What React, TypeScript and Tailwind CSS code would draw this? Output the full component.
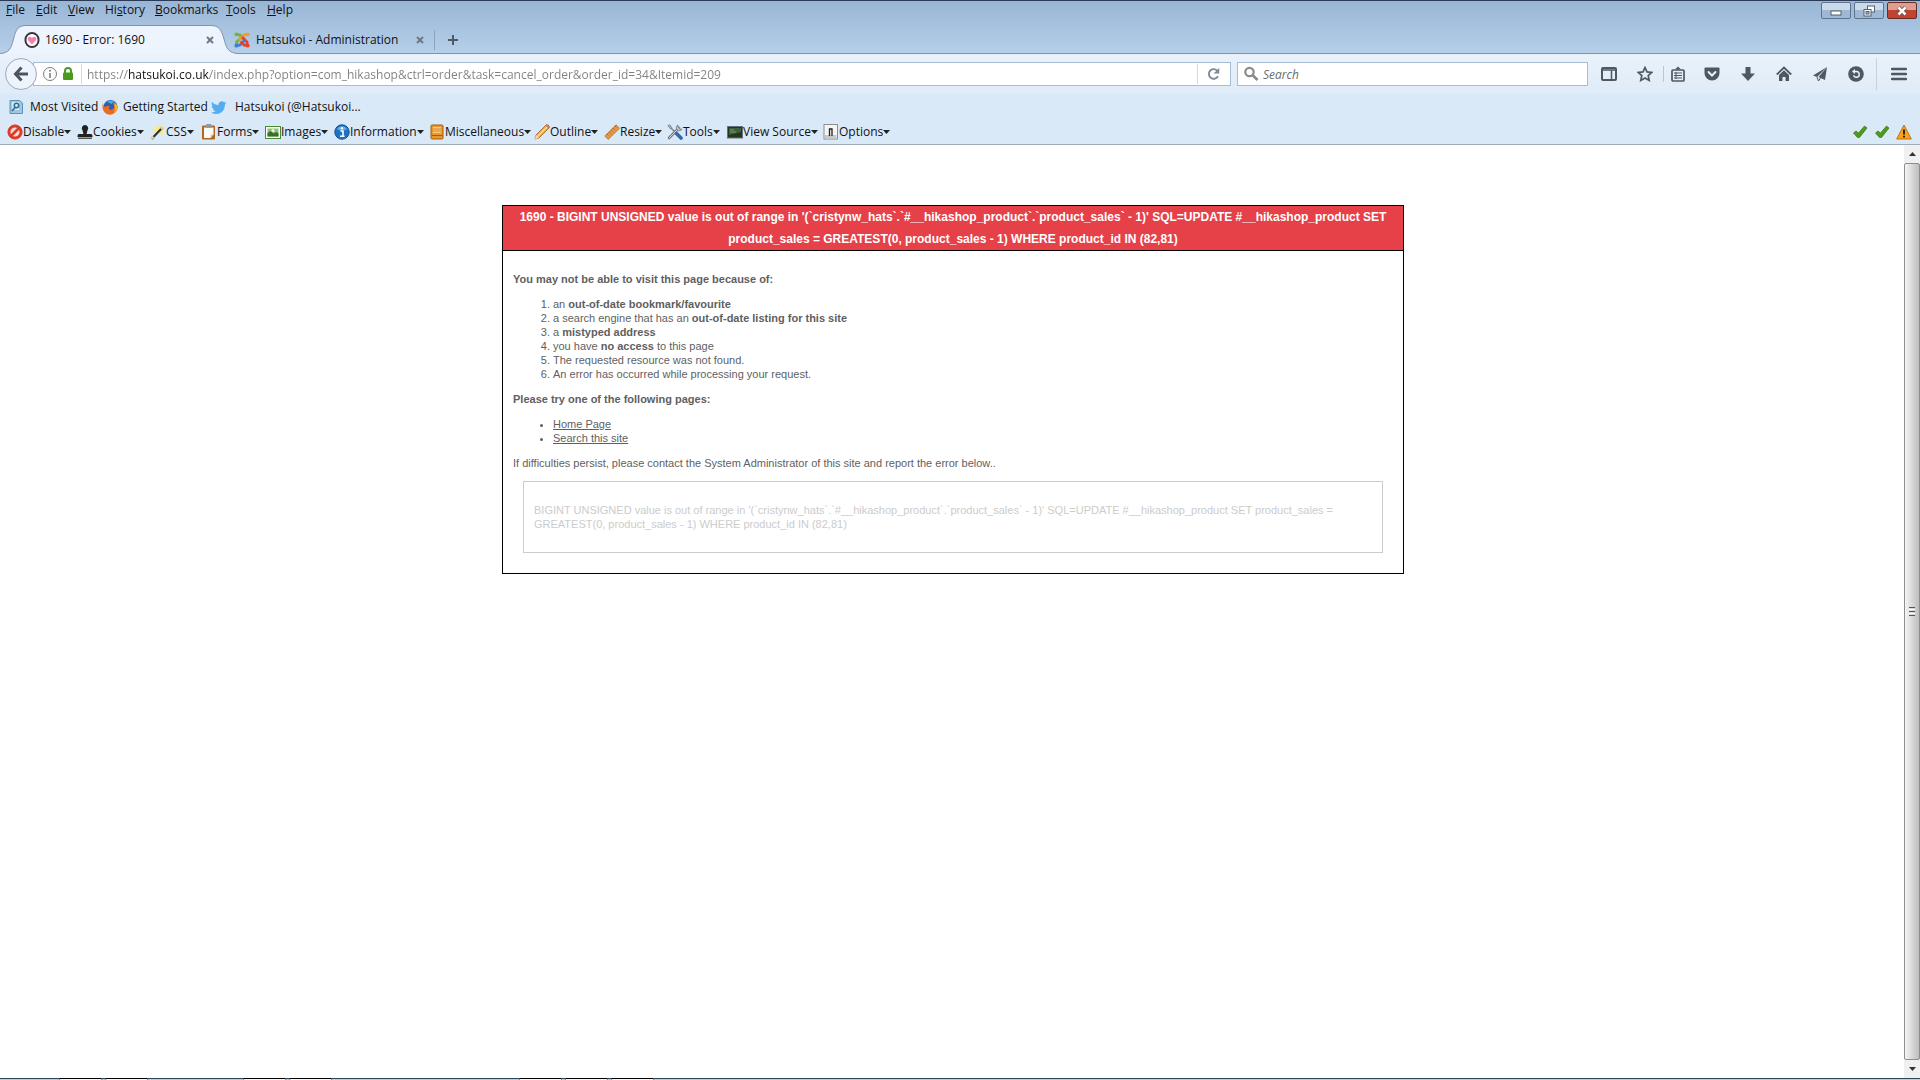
import type { ReactNode } from 'react';

const menus = [
  { key: 'F', before: '', after: 'ile', width: 'w-[30px]' },
  { key: 'E', before: '', after: 'dit', width: 'w-[32px]' },
  { key: 'V', before: '', after: 'iew', width: 'w-[37px]' },
  { key: 's', before: 'Hi', after: 'tory', width: 'w-[50px]' },
  { key: 'B', before: '', after: 'ookmarks', width: 'w-[71px]' },
  { key: 'T', before: '', after: 'ools', width: 'w-[41px]' },
  { key: 'H', before: '', after: 'elp', width: 'w-[40px]' }
];

function Icon({ children, className = 'w-4 h-4' }: { children: ReactNode; className?: string }) {
  return (
    <svg viewBox="0 0 16 16" className={`${className} shrink-0`} fill="none" aria-hidden="true">
      {children}
    </svg>
  );
}

const devTools = [
  {
    label: 'Disable',
    width: 'w-[70px]',
    icon: (
      <>
        <circle cx="8" cy="8" r="7" fill="#fff" stroke="#b3200f" strokeWidth="1" />
        <circle cx="8" cy="8" r="5.8" fill="#f8d9d3" stroke="#e23a22" strokeWidth="2.4" />
        <path d="M4 12L12 4" stroke="#e23a22" strokeWidth="2.6" />
      </>
    )
  },
  {
    label: 'Cookies',
    width: 'w-[73px]',
    icon: (
      <>
        <path d="M8 1a3.4 3.4 0 0 1 2.4 5.6L9.6 10H14q1.500 0 1.500 2v1H.5v-1q0-2 1.500-2h4.400L5.600 6.600A3.400 3.400 0 0 1 8 1z" fill="#222" />
        <path d="M1 13.500h14V15H1z" fill="#555" />
      </>
    )
  },
  {
    label: 'CSS',
    width: 'w-[51px]',
    icon: (
      <>
        <path d="M6 1l2 2 3-2 0 3 4 1-3 2 1 4-4-2-3 3-1-4-3-2 4-1z" fill="#ffe873" />
        <path d="M1.500 15L12.500 3.500" stroke="#333" strokeWidth="2.200" />
        <path d="M1 15.200l2.500-2.600M11 5l2-2" stroke="#e8d7a0" strokeWidth="2" />
      </>
    )
  },
  {
    label: 'Forms',
    width: 'w-[64px]',
    icon: (
      <>
        <rect x="1" y="1.500" width="13" height="14" rx="1" fill="#b5661d" />
        <path d="M3 3.500h9.500v7L9.500 14H3z" fill="#fbfbf7" />
        <path d="M12.500 10.500h-3V14z" fill="#c9c9c9" />
        <rect x="5" y="0" width="5.500" height="4" rx="1" fill="#8f98a3" />
      </>
    )
  },
  {
    label: 'Images',
    width: 'w-[69px]',
    icon: (
      <>
        <rect x=".5" y="2.500" width="15" height="12" fill="#fff" stroke="#4b8a35" />
        <rect x="2.500" y="4.500" width="11" height="8" fill="#8cc474" />
        <path d="M2.500 12.500V9l3-2 3 2.500 3-1.500 2 1.500v3z" fill="#3d6b31" />
        <circle cx="8" cy="6.500" r="1.500" fill="#f4f8d5" />
      </>
    )
  },
  {
    label: 'Information',
    width: 'w-[95px]',
    icon: (
      <>
        <circle cx="8" cy="8" r="7.200" fill="#1d74c5" stroke="#114f94" />
        <path d="M3 5a6 6 0 0 1 10 0q-5 3-10 0z" fill="#66a9e4" />
        <path d="M6.500 7H9v5M6 12.200h4.500" stroke="#fff" strokeWidth="1.600" />
        <circle cx="8" cy="4.200" r="1.200" fill="#fff" />
      </>
    )
  },
  {
    label: 'Miscellaneous',
    width: 'w-[105px]',
    icon: (
      <>
        <rect x="2" y="1" width="12" height="14" rx="1" fill="#e9962d" stroke="#a55d12" />
        <rect x="4" y="3" width="8" height="6" fill="#f9cd7d" />
        <path d="M4 5h8M4 7h8" stroke="#d58524" />
        <path d="M2.500 11.500h11" stroke="#a55d12" />
      </>
    )
  },
  {
    label: 'Outline',
    width: 'w-[70px]',
    icon: (
      <>
        <path d="M1 15l1-4L12 1q2-1 3 1 1 1 0 2L5 14z" fill="#f2a23c" stroke="#a5601d" strokeWidth=".8" />
        <path d="M3.500 12.500L13 3" stroke="#fde0a0" strokeWidth="1.400" />
        <path d="M11.500 1.500l3 3 .8-1-2.600-3z" fill="#d87272" />
        <path d="M1 15l1-4 3 3z" fill="#f3dfc0" />
      </>
    )
  },
  {
    label: 'Resize',
    width: 'w-[63px]',
    icon: (
      <>
        <path d="M.8 12L12 .8 15.500 4.200 4.200 15.400z" fill="#e49a4b" stroke="#b06a25" strokeWidth=".8" />
        <path d="M3 10l1.500 1.500M5 8l2 2M7 6l1.500 1.500M9 4l2 2M11 2l1.500 1.500" stroke="#a05d1e" strokeWidth=".7" />
      </>
    )
  },
  {
    label: 'Tools',
    width: 'w-[60px]',
    icon: (
      <>
        <path d="M2 2l9 9" stroke="#7b828a" strokeWidth="1.600" />
        <path d="M9.500 9.500l4.500 4.500" stroke="#2c69b4" strokeWidth="3.600" strokeLinecap="round" />
        <path d="M2 14L12 4" stroke="#6d747c" strokeWidth="2.600" strokeLinecap="round" />
        <path d="M2 14L12 4" stroke="#d6dade" strokeWidth="1" strokeLinecap="round" />
        <path d="M11 1a3 3 0 1 0 4 4l-2 .3L11 3z" fill="#c5cacf" stroke="#6d747c" strokeWidth=".8" />
        <path d="M.8 1.500L3 .8l2 3-1.500 1.200z" fill="#aeb4ba" stroke="#6d747c" strokeWidth=".6" />
      </>
    )
  },
  {
    label: 'View Source',
    width: 'w-[96px]',
    icon: (
      <>
        <rect x=".5" y="2.500" width="15" height="11.500" fill="#23361f" stroke="#67717d" />
        <path d="M2 4h12v4L2 11z" fill="#41603a" />
        <path d="M3 6h4M3 8h6" stroke="#7fa573" strokeWidth=".8" />
      </>
    )
  },
  {
    label: 'Options',
    width: 'w-[70px]',
    icon: (
      <>
        <rect x="1" y=".5" width="13.500" height="14.500" fill="#f4f4f4" stroke="#8a8f96" />
        <path d="M2 11h11.500v3.500H2z" fill="#c6c9cd" />
        <path d="M6.500 12V5h2.500v7" stroke="#222" strokeWidth="1.300" />
      </>
    )
  }
];

function Joomla() {
  return (
    <Icon>
      <g strokeWidth="2.800" strokeLinejoin="round">
        <path d="M2.500 13.500V10L8 5" stroke="#77b043" />
        <path d="M2.500 2.500L6 3l5 5.500" stroke="#77b043" />
        <path d="M13.500 2.500L10 3 5 8" stroke="#f49a2b" />
        <path d="M13.500 13.500L13 10 8 5" stroke="#e5432f" />
        <path d="M2.500 13.500L6 13l5-5" stroke="#3f7fd0" />
        <path d="M13.500 13.500L10 13 6.500 9.500" stroke="#e5432f" />
      </g>
      <circle cx="2.300" cy="2.300" r="1.900" fill="#77b043" />
      <circle cx="13.700" cy="2.300" r="1.900" fill="#f49a2b" />
      <circle cx="2.300" cy="13.700" r="1.900" fill="#3f7fd0" />
      <circle cx="13.700" cy="13.700" r="1.900" fill="#e5432f" />
    </Icon>
  );
}

function CloseTab({ label }: { label: string }) {
  return (
    <button aria-label={label} className="flex w-4 h-4 items-center justify-center">
      <svg viewBox="0 0 8 8" className="w-2 h-2" aria-hidden="true">
        <path d="M1 1l6 6M7 1L1 7" stroke="#6e7885" strokeWidth="2" />
      </svg>
    </button>
  );
}

function Tabs() {
  return (
    <div role="tablist" className="flex h-[29px] items-stretch">
      <div className="relative flex w-[234px] items-center pl-6">
        <svg viewBox="0 0 240 29" className="absolute left-0 top-0 w-[240px] h-[29px]" aria-hidden="true">
          <path d="M0 29V28.500C9 28 11 24 13.500 14C16 4 18 .5 27 .5H210C219 .5 221 4 224 14C226.500 24 229 28 238 28.500V29z" fill="#eef4fd" />
          <path d="M0 28.500C9 28 11 24 13.500 14C16 4 18 .5 27 .5H210C219 .5 221 4 224 14C226.500 24 229 28 238 28.500H240" fill="none" stroke="#7d93ae" />
        </svg>
        <div className="relative flex flex-1 items-center">
          <Icon>
            <rect x="1.500" y="1" width="13" height="14" rx="6.500" fill="#fff" stroke="#3b3439" strokeWidth="2" />
            <path d="M8 12.500L4.200 8.500C3 6.500 4.500 4.500 6.200 4.800 7.200 5 7.700 5.600 8 6.200 8.300 5.600 8.800 5 9.800 4.800 11.500 4.500 13 6.500 11.800 8.500z" fill="#f57fb0" />
          </Icon>
          <button role="tab" aria-selected="true" className="ml-[5px] w-[157px] text-left">1690 - Error: 1690</button>
          <CloseTab label="Close 1690 - Error: 1690" />
        </div>
      </div>
      <div className="flex flex-1 items-center border-b border-[#7d93ae] pt-px">
        <Joomla />
        <button role="tab" aria-selected="false" className="ml-[6px] w-[156px] text-left">Hatsukoi - Administration</button>
        <CloseTab label="Close Hatsukoi - Administration" />
        <span className="ml-1.5 h-5 w-px bg-[#8ba2c0]" />
        <button aria-label="New tab" className="ml-2.5 flex w-4 h-4 items-center justify-center">
          <svg viewBox="0 0 10 10" className="w-2.5 h-2.5" aria-hidden="true">
            <path d="M5 0v10M0 5h10" stroke="#4e5a68" strokeWidth="2" />
          </svg>
        </button>
      </div>
    </div>
  );
}

const navIcons = [
  {
    label: 'Sidebar',
    width: 'w-9',
    icon: (
      <>
        <rect x="1" y="2" width="14" height="12" rx="1" stroke="#4d5863" strokeWidth="2" />
        <path d="M1 4h14M10.500 4v10" stroke="#4d5863" strokeWidth="1.500" />
      </>
    )
  },
  {
    label: 'Bookmark this page',
    width: 'w-9',
    icon: <path d="M8 1.500l2 4.400 4.800.5-3.600 3.200 1 4.800L8 12l-4.200 2.400 1-4.800L1.200 6.400 6 5.900z" stroke="#4d5863" strokeWidth="1.700" />
  },
  {
    label: 'Bookmarks list',
    width: 'w-[31px]',
    divider: true,
    icon: (
      <>
        <rect x="2" y="4" width="12" height="11" rx="1" stroke="#4d5863" strokeWidth="1.700" />
        <path d="M5 3.500L8 .5l3 3z" fill="#4d5863" />
        <path d="M4 7h8M4 9.500h8M4 12h8M6 6v7" stroke="#4d5863" />
      </>
    )
  },
  {
    label: 'Pocket',
    width: 'w-9',
    icon: (
      <>
        <path d="M1.500 1.500h13q1 0 1 1V7a7.500 7.500 0 0 1-15 0V2.500q0-1 1-1z" fill="#4d5863" />
        <path d="M4.500 6L8 9.500 11.500 6" stroke="#eaf2fb" strokeWidth="2" strokeLinecap="round" />
      </>
    )
  },
  {
    label: 'Downloads',
    width: 'w-9',
    icon: <path d="M5.500 1h5v6.500H15L8 15 1 7.500h4.500z" fill="#4d5863" />
  },
  {
    label: 'Home',
    width: 'w-9',
    icon: (
      <>
        <path d="M.8 8.500L8 1.500l7.200 7" stroke="#4d5863" strokeWidth="1.800" />
        <path d="M3 9l5-4.800L13 9v6H9.500v-4h-3v4H3z" fill="#4d5863" />
      </>
    )
  },
  {
    label: 'Send tab',
    width: 'w-9',
    icon: (
      <>
        <path d="M15 1L1 9.500l4 1.500z" fill="#4d5863" />
        <path d="M15 1L6.500 11l6.500 3z" fill="#4d5863" />
        <path d="M5 11l1.500 4 2-3" stroke="#4d5863" />
      </>
    )
  },
  {
    label: 'Restore session',
    width: 'w-9',
    icon: (
      <>
        <circle cx="8" cy="8" r="7.800" fill="#4d5863" />
        <path d="M6 5.500h2.500a2.900 2.900 0 1 1-2.900 3.800" stroke="#eaf2fb" strokeWidth="1.400" />
        <path d="M7 3L4 5.500 7 8z" fill="#eaf2fb" />
      </>
    )
  }
];

function NavBar() {
  return (
    <div className="flex h-10 items-center bg-linear-to-b from-[#eaf2fa] to-[#dfebf8] pl-[5px]">
      <button aria-label="Back" className="z-10 flex w-8 h-8 shrink-0 items-center justify-center rounded-full border border-[#9aaabd] bg-[#eef4fb]">
        <Icon>
          <path d="M8.500 1.500L2.500 8l6 6.500M3 8h12" stroke="#4a5560" strokeWidth="3" />
        </Icon>
      </button>
      <div className="-ml-1 flex h-6 flex-1 items-center border border-[#a9bdd2] bg-white pl-2">
        <button aria-label="Site information" className="w-4 h-4">
          <Icon>
            <circle cx="8" cy="8" r="6.500" stroke="#7d7d7d" />
            <path d="M8 7v5" stroke="#7d7d7d" strokeWidth="1.600" />
            <circle cx="8" cy="4.800" r="1" fill="#7d7d7d" />
          </Icon>
        </button>
        <button aria-label="Secure connection" className="ml-0.5 w-4 h-4">
          <Icon>
            <path d="M5 7V5a3 3 0 0 1 6 0v2" stroke="#4a9a1f" strokeWidth="2" />
            <rect x="3" y="6.500" width="10" height="7.500" rx="1" fill="#4a9a1f" />
          </Icon>
        </button>
        <span className="mx-[5px] h-5 w-px bg-[#d5dae0]" />
        <input
          aria-label="Address"
          defaultValue="https://hatsukoi.co.uk/index.php?option=com_hikashop&ctrl=order&task=cancel_order&order_id=34&Itemid=209"
          className="h-5 min-w-0 flex-1 bg-[linear-gradient(90deg,#808080_41px,#111_41px,#111_122px,#808080_122px)] bg-clip-text text-transparent outline-none"
        />
        <span className="h-5 w-px bg-[#d5dae0]" />
        <button aria-label="Reload" className="flex w-8 h-5 items-center justify-center">
          <Icon className="w-3.5 h-3.5">
            <path d="M12.500 10.500a5.500 5.500 0 1 1-1-6.500" stroke="#7d8995" strokeWidth="2.200" />
            <path d="M14 1v6.500H7.500z" fill="#7d8995" />
          </Icon>
        </button>
      </div>
      <div className="ml-1.5 flex h-6 w-[351px] shrink-0 items-center border border-[#a9bdd2] bg-white pl-[5px]">
        <Icon>
          <circle cx="6.500" cy="6" r="4.200" stroke="#8b8b8b" strokeWidth="2.200" />
          <path d="M9.500 9l5 5" stroke="#8b8b8b" strokeWidth="2.600" />
        </Icon>
        <input
          aria-label="Search"
          placeholder="Search"
          className="ml-1 h-5 min-w-0 flex-1 outline-none placeholder:italic placeholder:text-[#6b6b6b]"
        />
      </div>
      <div className="ml-[3px] flex shrink-0 items-center">
        {navIcons.map((item) => (
          <div key={item.label} className={`${item.width} flex items-center ${item.divider ? 'justify-start' : 'justify-center'}`}>
            {item.divider && <span className="mr-1.5 h-4 w-px bg-[#b9c6d5]" />}
            <button aria-label={item.label} className="w-4 h-4">
              <Icon>{item.icon}</Icon>
            </button>
          </div>
        ))}
      </div>
      <span className="ml-0.5 h-8 w-px shrink-0 bg-[#c4d1df]" />
      <button aria-label="Open menu" className="flex w-[43px] h-8 shrink-0 items-center justify-center">
        <Icon>
          <path d="M1 3h14M1 8h14M1 13h14" stroke="#4d5863" strokeWidth="2.500" strokeLinecap="round" />
        </Icon>
      </button>
    </div>
  );
}

function Bookmarks() {
  return (
    <nav aria-label="Bookmarks" className="flex h-[26px] items-center pl-2">
      <a href="#most-visited" className="flex w-[94px] items-center whitespace-nowrap">
        <Icon>
          <path d="M2 1.500h9.500L14.500 4v10.500H2z" fill="#9fc7e2" stroke="#5c93b8" />
          <path d="M4 3h7v8H4z" fill="#d6eaf6" />
          <circle cx="8.500" cy="6.500" r="2.200" stroke="#316b95" strokeWidth="1.500" />
          <path d="M7 8.500L4 12" stroke="#316b95" strokeWidth="1.800" />
        </Icon>
        <span className="ml-1.5">Most Visited</span>
      </a>
      <a href="#getting-started" className="flex w-[109px] items-center whitespace-nowrap">
        <Icon>
          <circle cx="8.500" cy="8" r="7" fill="#2a62b0" />
          <path d="M5 3q4-3 8 0-3 0-3 2z" fill="#47b3e8" />
          <path d="M1 4q0 3 2.500 4Q6 6 8 7.500 6 8.500 7 10q3 2 5-1 .5-3-1-5 4 1 4.500 4A7.500 7.500 0 0 1 .5 8.500Q.3 6 1 4z" fill="#ec6c1f" />
          <path d="M12 3.500q4 2 3.300 6-1 4-4 5.500 3-4 .7-11.500z" fill="#f9b530" />
        </Icon>
        <span className="ml-[5px]">Getting Started</span>
      </a>
      <a href="#hatsukoi" className="flex items-center whitespace-nowrap">
        <Icon>
          <path d="M15.500 3.500q-.8.500-1.800.6 1-.7 1.300-1.700-.9.500-2 .8a3.200 3.200 0 0 0-5.400 2.900Q3.500 6 1 2.800q-1.200 2.800 1 4.300-.8 0-1.400-.4 0 2.500 2.500 3.200-.7.200-1.400 0 .7 2 3 2.200Q2.700 13.700 0 13.400q6 3.500 11-.4 3-2.800 3-7.900 1-.7 1.500-1.600z" fill="#55acee" />
        </Icon>
        <span className="ml-2">Hatsukoi (@Hatsukoi...</span>
      </a>
    </nav>
  );
}

function Check() {
  return (
    <Icon>
      <path d="M1.500 9L4 7l2.500 2L12.500 2 15 4 7.500 13.500H5.500z" fill="#4e9a1c" stroke="#39750f" strokeWidth=".7" />
    </Icon>
  );
}

function DevToolbar() {
  return (
    <div className="flex h-[25px] items-center border-b border-[#a0aab9] pl-[7px]">
      {devTools.map((tool) => (
        <button key={tool.label} className={`${tool.width} flex shrink-0 items-center whitespace-nowrap`}>
          <Icon>{tool.icon}</Icon>
          <span>{tool.label}</span>
          <svg viewBox="0 0 7 4" className="w-[7px] h-1 shrink-0" aria-hidden="true">
            <path d="M0 0h7L3.500 4z" fill="#222" />
          </svg>
        </button>
      ))}
      <div className="ml-auto flex items-center gap-1.5 pr-2">
        <Check />
        <Check />
        <Icon>
          <path d="M8 1l7.300 14H.7z" fill="#f9a21b" stroke="#c8700c" strokeLinejoin="round" />
          <path d="M8 5.500v5M8 11.800v1.800" stroke="#2a1c05" strokeWidth="1.900" />
        </Icon>
      </div>
    </div>
  );
}

function WindowButtons() {
  return (
    <div className="ml-auto flex h-[18px] gap-[3px] pr-[3px] pt-px">
      <button aria-label="Minimize" className="flex w-[30px] items-center justify-center rounded-xs border border-[#5d7491] bg-linear-to-b from-[#cbdaea] from-50% to-[#9fb8d3] to-50%">
        <svg viewBox="0 0 12 12" className="w-3 h-3" aria-hidden="true">
          <rect x="1" y="6" width="10" height="4" fill="#fff" stroke="#53606e" />
        </svg>
      </button>
      <button aria-label="Restore" className="flex w-[30px] items-center justify-center rounded-xs border border-[#5d7491] bg-linear-to-b from-[#cbdaea] from-50% to-[#9fb8d3] to-50%">
        <svg viewBox="0 0 12 12" className="w-3 h-3" aria-hidden="true">
          <rect x="4.500" y="1" width="7" height="6" fill="#fff" stroke="#53606e" />
          <rect x="1" y="4.500" width="7" height="6.500" fill="#fff" stroke="#53606e" />
          <rect x="3" y="6.500" width="3" height="2.500" fill="#9fb8d3" stroke="#53606e" />
        </svg>
      </button>
      <button aria-label="Close" className="flex w-[30px] items-center justify-center rounded-xs border border-[#6b2a23] bg-linear-to-b from-[#dd9d8f] from-50% to-[#c04530] to-50%">
        <svg viewBox="0 0 12 12" className="w-3 h-3" aria-hidden="true">
          <path d="M2.500 2.500l7 7M9.500 2.500l-7 7" stroke="#6a4440" strokeWidth="4" />
          <path d="M2.500 2.500l7 7M9.500 2.500l-7 7" stroke="#fff" strokeWidth="2.500" />
        </svg>
      </button>
    </div>
  );
}

function ErrorPage() {
  return (
    <main className="flex-1 pl-0.5 pt-[60px] font-['Liberation_Sans',Arial,sans-serif] text-[11px] leading-[14px] text-[#5f5f5f]">
      <section className="mx-auto w-[902px] max-w-full border border-black">
        <h1 className="border-b border-black bg-[#e64048] px-2.5 text-center text-[12px] font-bold leading-[22px] text-white">
          1690 - BIGINT UNSIGNED value is out of range in '(`cristynw_hats`.`#__hikashop_product`.`product_sales` - 1)' SQL=UPDATE #__hikashop_product SET
          product_sales = GREATEST(0, product_sales - 1) WHERE product_id IN (82,81)
        </h1>
        <div className="space-y-[11px] px-2.5 pb-5 pt-[21px]">
          <p className="font-bold">You may not be able to visit this page because of:</p>
          <ol className="list-decimal pl-10">
            <li>an <strong>out-of-date bookmark/favourite</strong></li>
            <li>a search engine that has an <strong>out-of-date listing for this site</strong></li>
            <li>a <strong>mistyped address</strong></li>
            <li>you have <strong>no access</strong> to this page</li>
            <li>The requested resource was not found.</li>
            <li>An error has occurred while processing your request.</li>
          </ol>
          <p className="font-bold">Please try one of the following pages:</p>
          <ul className="list-disc pl-10">
            <li><a href="#home" className="underline">Home Page</a></li>
            <li><a href="#search" className="underline">Search this site</a></li>
          </ul>
          <p>If difficulties persist, please contact the System Administrator of this site and report the error below..</p>
          <div className="mx-2.5 border border-[#ccc] px-2.5 py-[21px] text-[#ccc]">
            <p>
              BIGINT UNSIGNED value is out of range in '(`cristynw_hats`.`#__hikashop_product`.`product_sales` - 1)' SQL=UPDATE #__hikashop_product SET product_sales =
              GREATEST(0, product_sales - 1) WHERE product_id IN (82,81)
            </p>
          </div>
        </div>
      </section>
    </main>
  );
}

function ScrollBar() {
  return (
    <div className="flex w-4 shrink-0 flex-col bg-[#f0f0f0]">
      <button aria-label="Scroll up" className="flex h-[18px] items-center justify-center">
        <svg viewBox="0 0 7 4" className="w-[7px] h-1" aria-hidden="true">
          <path d="M0 4h7L3.500 0z" fill="#333" />
        </svg>
      </button>
      <div className="flex flex-1 flex-col items-center justify-center gap-px rounded-xs border border-[#8e8e8e] bg-linear-to-r from-[#f5f5f5] to-[#bdbdbd]">
        <span className="h-px w-1.5 bg-[#555]" />
        <span className="h-px w-1.5 bg-white" />
        <span className="h-px w-1.5 bg-[#555]" />
        <span className="h-px w-1.5 bg-white" />
        <span className="h-px w-1.5 bg-[#555]" />
      </div>
      <button aria-label="Scroll down" className="flex h-[18px] items-center justify-center">
        <svg viewBox="0 0 7 4" className="w-[7px] h-1" aria-hidden="true">
          <path d="M0 0h7L3.500 4z" fill="#333" />
        </svg>
      </button>
    </div>
  );
}

// Top edge of the taskbar, with the grouped window buttons peeking out.
function TaskbarEdge() {
  const group = '-mt-px h-0.5 w-[43px] border-x border-t border-x-[#8d8790] border-t-black bg-[#f4f6f8]';
  return (
    <div className="flex h-0.5 gap-[3px] border-t border-[#2f4654] bg-[#b9cfdd] pl-[59px]">
      <span className={group} />
      <span className={group} />
      <span className={`${group} ml-[92px]`} />
      <span className={group} />
      <span className={`${group} ml-[184px]`} />
      <span className={group} />
      <span className={group} />
    </div>
  );
}

export default function App() {
  return (
    <div className="flex min-h-screen flex-col overflow-hidden bg-white font-['Open_Sans','Noto_Sans',sans-serif] text-[12px] leading-4 text-[#111]">
      <header className="bg-[#dae9f7]">
        <div className="bg-linear-to-b from-[#98b5d5] to-[#b7d0ea]">
          <div className="flex h-[25px] items-start border-t border-[#2b3a55] pl-1.5">
            {menus.map((menu) => (
              <button key={menu.after} className={`${menu.width} pt-px text-left`}>
                {menu.before}
                <span className="underline">{menu.key}</span>
                {menu.after}
              </button>
            ))}
            <WindowButtons />
          </div>
          <Tabs />
        </div>
        <NavBar />
        <Bookmarks />
        <DevToolbar />
      </header>
      <div className="flex flex-1">
        <ErrorPage />
        <ScrollBar />
      </div>
      <TaskbarEdge />
    </div>
  );
}
